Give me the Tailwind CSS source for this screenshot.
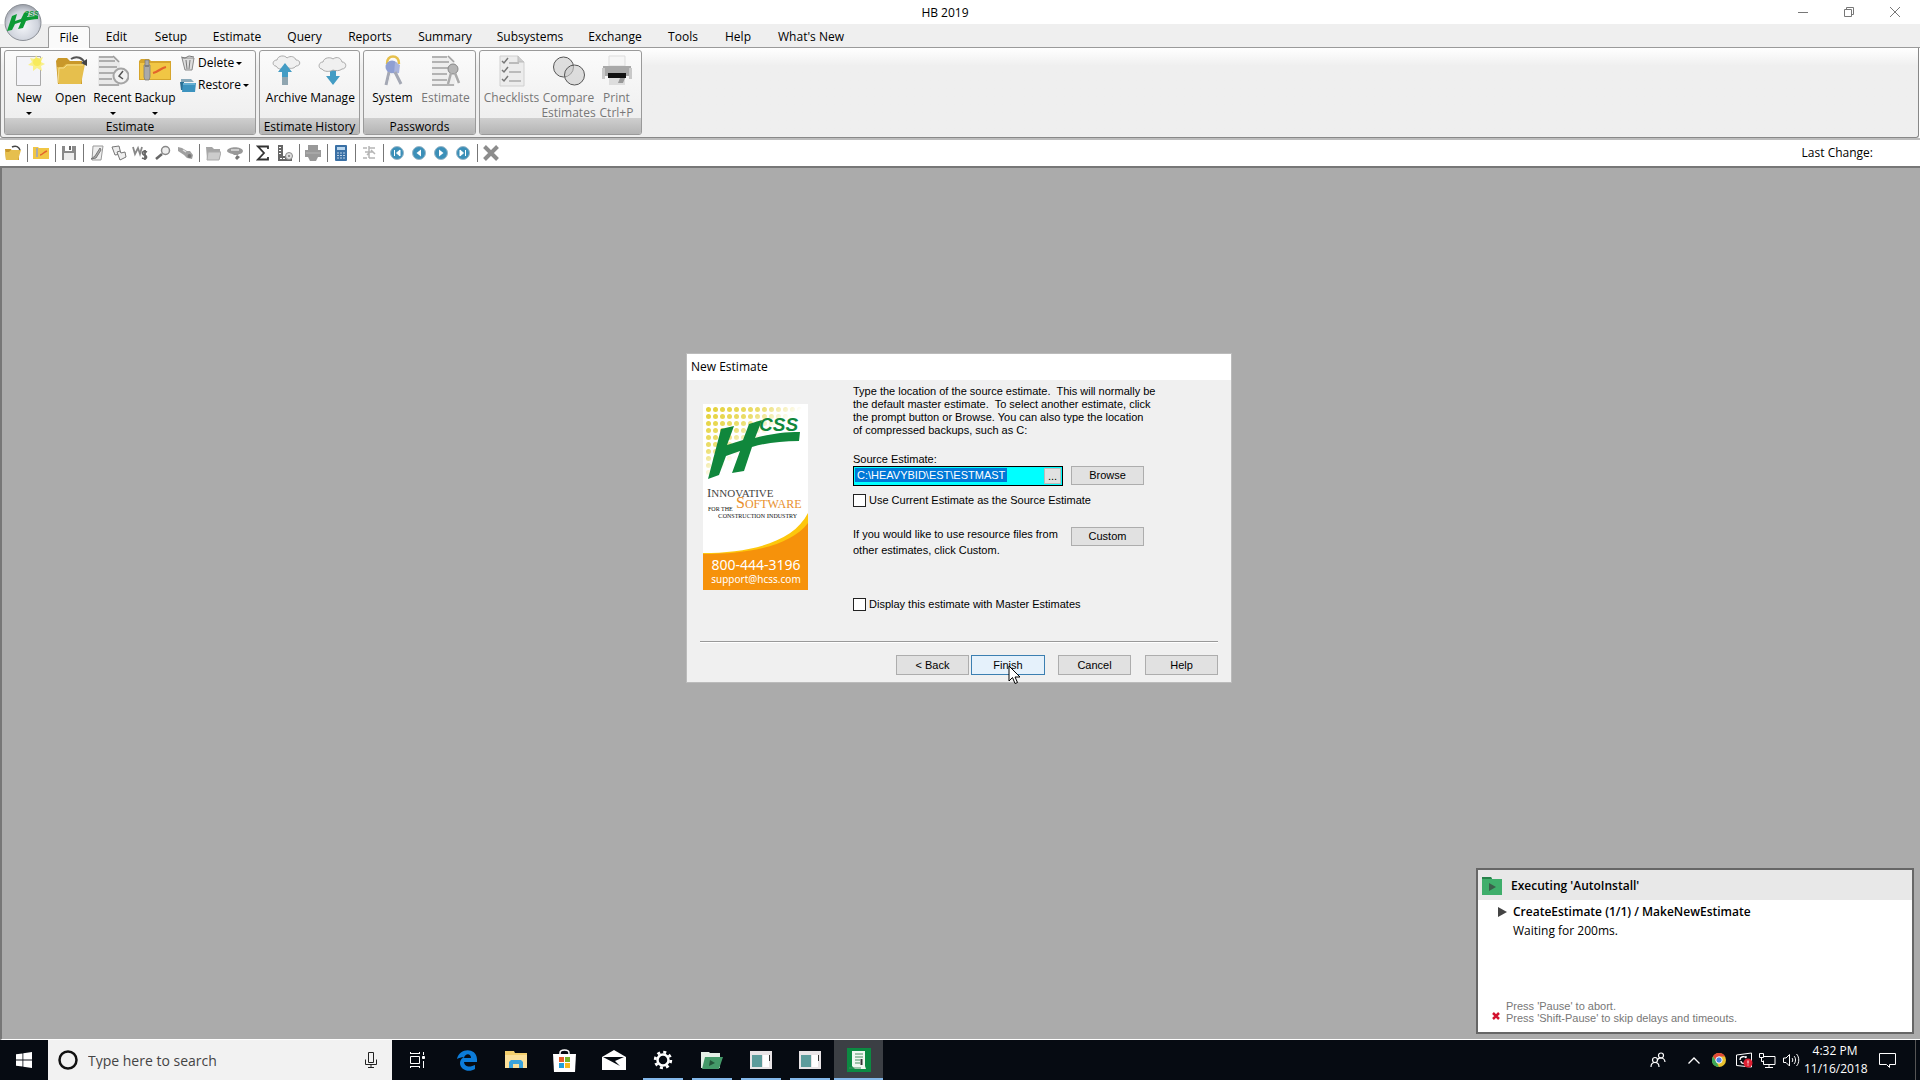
<!DOCTYPE html>
<html lang="en">
<head>
<meta charset="utf-8">
<title>HB 2019</title>
<script src="https://cdn.jsdelivr.net/npm/@tailwindcss/browser@4"></script>
</head>
<body class="h-screen overflow-hidden flex flex-col bg-white text-black text-[12px] leading-4 font-['Open_Sans','Noto_Sans',sans-serif]">

<!-- Title bar -->
<header class="relative h-6 shrink-0 flex items-center bg-white">
  <h1 class="flex-1 text-center pl-[110px] pt-px text-[12px]">HB 2019</h1>
  <div class="flex h-full pr-[2px] text-[#777]">
    <button aria-label="Minimize" class="w-[46px] flex items-center justify-center"><svg width="10" height="10" viewBox="0 0 10 10" stroke="currentColor" fill="none"><path d="M0 5.500h10"/></svg></button>
    <button aria-label="Restore" class="w-[46px] flex items-center justify-center"><svg width="10" height="10" viewBox="0 0 10 10" stroke="currentColor" fill="none"><path d="M.5 2.500h7v7h-7zM2.500 2.500v-2h7v7h-2"/></svg></button>
    <button aria-label="Close" class="w-[46px] flex items-center justify-center"><svg width="10" height="10" viewBox="0 0 10 10" stroke="currentColor" fill="none"><path d="M0 0l10 10M10 0L0 10"/></svg></button>
  </div>
  <button aria-label="Application menu" class="absolute left-1 top-1 z-10">
    <svg width="38" height="38" viewBox="0 0 38 38">
      <defs><radialGradient id="orb" cx=".5" cy=".6" r=".6"><stop offset="0" stop-color="#f4f6fa"/><stop offset=".7" stop-color="#cfd3dc"/><stop offset="1" stop-color="#9a9fa8"/></radialGradient></defs>
      <circle cx="19" cy="18.500" r="18" fill="url(#orb)" stroke="#8b8f96"/>
      <path d="M8 12l5-2-2 7 6-2 3-6 5-1-2 5c4-1 8-1 11-1l0 3c-5 0-9 1-12 2l-3 7-5 1 3-7-6 2-3 6-5 1z" fill="#0c9a35"/>
      <text x="20" y="12" font-family="Liberation Sans" font-weight="bold" font-style="italic" font-size="7" fill="#0c9a35">CSS</text>
    </svg>
  </button>
</header>

<!-- Ribbon tabs -->
<nav class="h-6 shrink-0 bg-[#efefef] border-b border-[#9a9a9a] flex items-end pl-12">
  <button class="w-[42px] mr-px h-[22px] -mb-px bg-[#fafafa] border border-b-0 border-[#9a9a9a] rounded-t-[3px]">File</button>
  <button class="w-[51px] h-5">Edit</button>
  <button class="w-[58px] h-5">Setup</button>
  <button class="w-[74px] h-5">Estimate</button>
  <button class="w-[61px] h-5">Query</button>
  <button class="w-[70px] h-5">Reports</button>
  <button class="w-[80px] h-5">Summary</button>
  <button class="w-[90px] h-5">Subsystems</button>
  <button class="w-[80px] h-5">Exchange</button>
  <button class="w-[56px] h-5">Tools</button>
  <button class="w-[54px] h-5">Help</button>
  <button class="w-[92px] h-5">What's New</button>
</nav>

<!-- Ribbon -->
<section class="h-[90px] shrink-0 mr-px border-x border-b border-[#888] rounded-b-[3px] bg-linear-to-b from-white to-[#efefef] to-20% flex gap-[3px] pl-[3px] pt-[2px] pb-[2px]">
  <div class="w-[252px] border border-[#9a9a9a] rounded-[3px] overflow-hidden flex flex-col bg-linear-to-b from-[#fbfbfb] to-[#ececec]">
    <div class="flex-1 min-h-0 flex pl-[3px] pt-1">
      <button class="w-[42px] flex flex-col items-center">
        <svg class="h-8 w-8 shrink-0" viewBox="0 0 32 32"><path d="M3.500 1.500h24v29h-24z" fill="#f4f4f8" stroke="#aaa"/><path d="M23 0l2 4 5-2-2 5 4 2-4 2 1 5-5-3-4 3 0-5-5-1 4-3-2-4 5 1z" fill="#f9f08a"/><circle cx="24" cy="7" r="4" fill="#f7ea5c"/></svg>
        <span class="pt-[3px]">New</span><span class="mt-[6px] border-x-[3px] border-t-[3px] border-x-transparent border-t-black"></span>
      </button>
      <button class="w-[41px] flex flex-col items-center">
        <svg class="h-8 w-8 shrink-0" viewBox="0 0 32 32"><path d="M1 6l2-3h9l3 3h12v23H3z" fill="#c9982a"/><path d="M2 12h6l3-3h19l-4 20H4z" fill="#e6bf4d"/><path d="M3 28l1-15h5l3-3h16" fill="none" stroke="#f4dc8a"/><path d="M16 4c6-4 12-1 14 5" fill="none" stroke="#555" stroke-width="2"/><path d="M26 8l6 3V4z" fill="#444"/></svg>
        <span class="pt-[3px]">Open</span>
      </button>
      <button class="w-[43px] flex flex-col items-center">
        <svg class="h-8 w-8 shrink-0" viewBox="0 0 32 32"><path d="M1 1h17l5 5v25H1z" fill="#e9e9e9"/><path d="M2 2h14M2 6h16M2 12h18M2 18h15M2 24h13M2 30h20M16 1l6 6" stroke="#999" stroke-width="1.500" fill="none"/><circle cx="24" cy="21" r="7.500" fill="#f2f2f2" stroke="#a5a5a5" stroke-width="2"/><path d="M26 16l-4 5 4 3" fill="none" stroke="#555" stroke-width="1.500"/></svg>
        <span class="pt-[3px]">Recent</span><span class="mt-[6px] border-x-[3px] border-t-[3px] border-x-transparent border-t-black"></span>
      </button>
      <button class="w-[42px] flex flex-col items-center">
        <svg class="h-8 w-8 shrink-0" viewBox="0 0 32 32"><path d="M0 6l2-2h8l2 2h20v19H0z" fill="#d6a52c"/><path d="M1 8h30v16H1z" fill="#f1c644"/><path d="M6 5h4v5h1v12l-1 3H6l-1-3V10h1z" fill="#aaa" stroke="#777" stroke-width=".7"/><path d="M6 11h4" stroke="#555"/><path d="M14 18c5-1 8-5 13-6" fill="none" stroke="#e3642b" stroke-width="2.200"/></svg>
        <span class="pt-[3px]">Backup</span><span class="mt-[6px] border-x-[3px] border-t-[3px] border-x-transparent border-t-black"></span>
      </button>
      <div class="pl-1 flex flex-col items-start gap-[6px]">
        <button class="flex items-center gap-[2px]">
          <svg class="w-4 h-4" viewBox="0 0 16 16"><path d="M2 3h12l-2 12H5z" fill="#ddd" stroke="#888"/><path d="M1 2l4 1 4-2 5 1M6 5l1 9M10 5l-1 9" stroke="#777" fill="none"/></svg>
          <span>Delete</span><span class="border-x-[3px] border-t-[3px] border-x-transparent border-t-black"></span>
        </button>
        <button class="flex items-center gap-[2px]">
          <svg class="w-4 h-4" viewBox="0 0 16 16"><path d="M1 2h10l3 3H1z" fill="#89a9ba"/><path d="M0 5h4v8H1z" fill="#2a6f94"/><path d="M3 6h13l-1 9H2z" fill="#3c93bf"/><path d="M3 7h12" stroke="#8fcbe6"/></svg>
          <span>Restore</span><span class="border-x-[3px] border-t-[3px] border-x-transparent border-t-black"></span>
        </button>
      </div>
    </div>
    <h2 class="h-4 leading-[18px] text-center bg-linear-to-b from-[#cfcfcf] to-[#b4b4b4]">Estimate</h2>
  </div>

  <div class="w-[101px] border border-[#9a9a9a] rounded-[3px] overflow-hidden flex flex-col bg-linear-to-b from-[#fbfbfb] to-[#ececec]">
    <div class="flex-1 min-h-0 flex justify-center pt-1">
      <button class="w-[46px] flex flex-col items-center">
        <svg class="h-8 w-8 shrink-0" viewBox="0 0 32 32"><path d="M5 11c-4 0-4-6 1-6 1-5 8-5 10-2 4-3 8-1 9 2 5 0 5 6 0 6-2 3-7 3-9 1-3 3-9 3-11-1z" fill="#f0f0f0" stroke="#aaa"/><path d="M14 8l7 9h-4v5h-6v-5H7z" fill="#439cc4"/><path d="M11 22h6v8h-6z" fill="#8fa5b0"/></svg>
        <span class="pt-[3px]">Archive</span>
      </button>
      <button class="w-[46px] flex flex-col items-center">
        <svg class="h-8 w-8 shrink-0" viewBox="0 0 32 32"><path d="M13 14h6v7h4l-7 9-7-9h4z" fill="#439cc4"/><path d="M5 14c-4 0-4-7 1-7 1-5 8-5 10-3 4-3 8-1 9 3 5 0 5 7 0 7-2 2-7 2-9 1-3 2-9 2-11-1z" fill="#f0f0f0" stroke="#aaa"/></svg>
        <span class="pt-[3px]">Manage</span>
      </button>
    </div>
    <h2 class="h-4 leading-[18px] text-center whitespace-nowrap bg-linear-to-b from-[#cfcfcf] to-[#b4b4b4]">Estimate History</h2>
  </div>

  <div class="w-[113px] border border-[#9a9a9a] rounded-[3px] overflow-hidden flex flex-col bg-linear-to-b from-[#fbfbfb] to-[#ececec]">
    <div class="flex-1 min-h-0 flex justify-center pt-1">
      <button class="w-[52px] flex flex-col items-center">
        <svg class="h-8 w-8 shrink-0" viewBox="0 0 32 32"><path d="M10 9c-1-10 13-10 12 0" fill="none" stroke="#e6c04c" stroke-width="2.500"/><circle cx="15" cy="12" r="6.500" fill="#8f9fd2"/><path d="M18 7l5 3-1 8-5 1z" fill="#a9b4dd"/><path d="M12 17l-3 13M18 17l6 12" stroke="#a4a8b4" stroke-width="3"/><path d="M14 18l-2 9M15 18l1 2" stroke="#eee" stroke-width="1"/></svg>
        <span class="pt-[3px]">System</span>
      </button>
      <button class="w-[54px] flex flex-col items-center text-[#777]" disabled>
        <svg class="h-8 w-8 shrink-0" viewBox="0 0 32 32"><path d="M2 1h18l5 5v25H2z" fill="#eee"/><path d="M2 2h15M2 7h17M2 13h17M2 19h15M2 25h15M2 30h22M18 1l6 6" stroke="#a0a0a0" stroke-width="1.500" fill="none"/><circle cx="23" cy="14" r="5" fill="#b5b5b5" stroke="#888"/><path d="M21 18l-3 11M25 18l4 10" stroke="#aaa" stroke-width="2.500"/></svg>
        <span class="pt-[3px]">Estimate</span>
      </button>
    </div>
    <h2 class="h-4 leading-[18px] text-center bg-linear-to-b from-[#cfcfcf] to-[#b4b4b4]">Passwords</h2>
  </div>

  <div class="w-[163px] border border-[#9a9a9a] rounded-[3px] overflow-hidden flex flex-col bg-linear-to-b from-[#fbfbfb] to-[#ececec]">
    <div class="flex-1 min-h-0 flex pl-[3px] pt-1 text-[#777]">
      <button class="w-[57px] flex flex-col items-center" disabled>
        <svg class="h-8 w-8 shrink-0" viewBox="0 0 32 32"><path d="M4 1h18l6 6v24H4z" fill="#ececec" stroke="#d0d0d0"/><path d="M22 1v6h6" fill="#ccc" stroke="#bbb"/><path d="M6 6l2 2 4-5M6 15l2 2 4-5M6 24l2 2 4-5" fill="none" stroke="#777" stroke-width="1.500"/><path d="M13 8h10M13 17h12M13 26h12" stroke="#bbb" stroke-width="2"/></svg>
        <span class="pt-[3px]">Checklists</span>
      </button>
      <button class="w-[57px] flex flex-col items-center" disabled>
        <svg class="h-8 w-8 shrink-0" viewBox="0 0 32 32" stroke="#555" fill="#ccc" fill-opacity=".6"><circle cx="10.500" cy="12" r="10"/><circle cx="21.500" cy="20" r="10"/></svg>
        <span class="pt-[3px]">Compare</span><span class="leading-[13px]">Estimates</span>
      </button>
      <button class="w-[39px] flex flex-col items-center" disabled>
        <svg class="h-8 w-8 shrink-0" viewBox="0 0 32 32"><path d="M8 1h16v10H8z" fill="#f6f6f6" stroke="#ddd"/><path d="M2 11h28v10H2z" fill="#a9a9a9"/><path d="M1 13h3v11H1zM28 13h3v11h-3z" fill="#c9c9c9"/><path d="M7 18h18v5H7z" fill="#111"/><path d="M8 23h16v7H8z" fill="#ddd"/><path d="M19 23h5l-2 5h-5z" fill="#999"/></svg>
        <span class="pt-[3px]">Print</span><span class="leading-[13px]">Ctrl+P</span>
      </button>
    </div>
    <div class="h-4 bg-linear-to-b from-[#cfcfcf] to-[#b4b4b4]"></div>
  </div>
</section>

<!-- Quick toolbar -->
<div class="h-7 shrink-0 border-t-2 border-[#bdbdbd] bg-white flex items-center pl-[2px]">
  <button aria-label="Open estimate" class="w-[22px] flex justify-center"><svg width="18" height="16" viewBox="0 0 18 16"><path d="M1 4h6l1 2h7v9H2z" fill="#c9982a"/><path d="M1 7h4l2-2h10l-3 10H2z" fill="#e6bf4d"/><path d="M8 2c4-2 7 0 8 3" fill="none" stroke="#444" stroke-width="1.500"/></svg></button>
  <div class="w-[6px] flex justify-center"><i class="w-px h-[18px] bg-[#777]"></i></div>
  <button aria-label="Backup estimate" class="w-[22px] flex justify-center"><svg width="18" height="16" viewBox="0 0 18 16"><path d="M1 2h5l1 1h10v11H1z" fill="#f1c644"/><path d="M4 3h2v9H4z" fill="#aaa"/><path d="M8 10c2 0 4-3 7-4" fill="none" stroke="#e3642b" stroke-width="1.500"/></svg></button>
  <div class="w-[6px] flex justify-center"><i class="w-px h-[18px] bg-[#777]"></i></div>
  <button aria-label="Save" class="w-[22px] flex justify-center"><svg width="16" height="16" viewBox="0 0 16 16"><path d="M1 1h14v14H1z" fill="#8a8a8a"/><path d="M4 1h7v5H4z" fill="#fff"/><path d="M8 1h2v4H8z" fill="#666"/><path d="M3 8h10v7H3z" fill="#ededed"/></svg></button>
  <div class="w-[6px] flex justify-center"><i class="w-px h-[18px] bg-[#777]"></i></div>
  <button aria-label="Edit" class="w-[22px] flex justify-center"><svg width="16" height="16" viewBox="0 0 16 16"><path d="M4 1h10l-2 14H3z" fill="#eee" stroke="#999"/><path d="M11 3l-5 8-4 3 5-1 5-8z" fill="#aaa" stroke="#777"/></svg></button>
  <button aria-label="Copy" class="w-[22px] flex justify-center"><svg width="16" height="16" viewBox="0 0 16 16" fill="#eee" stroke="#777"><path d="M1 2l7-1 2 8-6 1z"/><path d="M6 7l3-1 1 2 4-1 1 5-6 3z"/></svg></button>
  <button aria-label="Worksheet" class="w-[22px] flex justify-center"><svg width="18" height="16" viewBox="0 0 18 16" fill="none" stroke="#888" stroke-width="1.800"><path d="M1 2l2 7 3-6 2 6 2-7"/><path d="M15 7c-4-2-6 1-3 3 4 1 3 5-2 3M13 5v10" stroke="#666"/></svg></button>
  <button aria-label="Find" class="w-[22px] flex justify-center"><svg width="16" height="16" viewBox="0 0 16 16"><circle cx="10.500" cy="5.500" r="4" fill="#eee" stroke="#888" stroke-width="1.500"/><path d="M7 9l-6 5" stroke="#666" stroke-width="2.500"/></svg></button>
  <button aria-label="Search" class="w-[22px] flex justify-center"><svg width="16" height="16" viewBox="0 0 16 16"><path d="M1 2l4 1 5 3 3 0 3 4-1 4-5-1-3-3-6-4z" fill="#a0a0a0"/><path d="M6 5l3 2" stroke="#ddd" stroke-width="1.500"/><circle cx="12.500" cy="11" r="2" fill="#777"/></svg></button>
  <div class="w-[6px] flex justify-center"><i class="w-px h-[18px] bg-[#777]"></i></div>
  <button aria-label="Folder" class="w-[22px] flex justify-center"><svg width="16" height="16" viewBox="0 0 16 16"><path d="M1 2h6l2 2h6v10H2z" fill="#a5a5a5"/><path d="M3 7h13l-2 8H2z" fill="#ccc" stroke="#aaa"/></svg></button>
  <button aria-label="Assign" class="w-[22px] flex justify-center"><svg width="16" height="16" viewBox="0 0 16 16"><path d="M0 6c1-5 15-5 16 0-1 4-4 2-5 4l-4 0C6 8 1 9 0 6z" fill="#999"/><path d="M4 5h8" stroke="#ccc" stroke-width="2"/><path d="M10 10l3 2-3 3-2-2z" fill="#777"/></svg></button>
  <div class="w-[6px] flex justify-center"><i class="w-px h-[18px] bg-[#777]"></i></div>
  <button aria-label="Sum" class="w-[22px] flex justify-center"><svg width="14" height="16" viewBox="0 0 14 16"><path d="M12 4V1.500H2L8 8l-6 6.500h10V12" fill="none" stroke="#333" stroke-width="1.800"/></svg></button>
  <button aria-label="Measure" class="w-[22px] flex justify-center"><svg width="16" height="16" viewBox="0 0 16 16"><path d="M1 0h5v11h9v5H1z" fill="#666"/><path d="M2 2.500h3M2 5.500h3M2 8.500h3M3 13.500h11" stroke="#fff" stroke-dasharray="2 1"/><circle cx="12" cy="11" r="3.500" fill="#ddd" stroke="#888"/><circle cx="12" cy="11" r="1" fill="#777"/></svg></button>
  <div class="w-[6px] flex justify-center"><i class="w-px h-[18px] bg-[#777]"></i></div>
  <button aria-label="Print" class="w-[22px] flex justify-center"><svg width="16" height="16" viewBox="0 0 16 16" fill="#999"><path d="M3 0h10v5h3v7h-3l-2 4H5l-2-4H0V5h3z"/><path d="M1 8h14" stroke="#b5b5b5"/></svg></button>
  <div class="w-[6px] flex justify-center"><i class="w-px h-[18px] bg-[#777]"></i></div>
  <button aria-label="Calculator" class="w-[22px] flex justify-center"><svg width="12" height="16" viewBox="0 0 12 16"><rect width="12" height="16" rx="1" fill="#3a70a5"/><path d="M2 2h8v3H2z" fill="#b9d6ee"/><path d="M2 8h8M2 10.500h8M2 13h8" stroke="#bcd2e6" stroke-width="1.200" stroke-dasharray="2 1"/></svg></button>
  <div class="w-[6px] flex justify-center"><i class="w-px h-[18px] bg-[#777]"></i></div>
  <button aria-label="Tree" class="w-[22px] flex justify-center"><svg width="14" height="16" viewBox="0 0 14 16" stroke="#b5b5b5" fill="none"><path d="M1 3h4M3 7h8M1 13h4M7 3h6M7 13h6M7 1v12M9 5l4 4M5 10l3-3" stroke-width="1.500"/></svg></button>
  <div class="w-[6px] flex justify-center"><i class="w-px h-[18px] bg-[#777]"></i></div>
  <button aria-label="First" class="w-[22px] flex justify-center"><svg width="14" height="14" viewBox="0 0 14 14"><circle cx="7" cy="7" r="6.500" fill="#3b8fb8" stroke="#9ab6c6"/><path d="M4.500 4v6M10 4L6.500 7 10 10z" fill="#fff" stroke="#fff"/></svg></button>
  <button aria-label="Previous" class="w-[22px] flex justify-center"><svg width="14" height="14" viewBox="0 0 14 14"><circle cx="7" cy="7" r="6.500" fill="#3b8fb8" stroke="#9ab6c6"/><path d="M9 3.500L4.500 7 9 10.500z" fill="#fff"/></svg></button>
  <button aria-label="Next" class="w-[22px] flex justify-center"><svg width="14" height="14" viewBox="0 0 14 14"><circle cx="7" cy="7" r="6.500" fill="#3b8fb8" stroke="#9ab6c6"/><path d="M5 3.500L9.500 7 5 10.500z" fill="#fff"/></svg></button>
  <button aria-label="Last" class="w-[22px] flex justify-center"><svg width="14" height="14" viewBox="0 0 14 14"><circle cx="7" cy="7" r="6.500" fill="#3b8fb8" stroke="#9ab6c6"/><path d="M9.500 4v6M4 4l3.500 3L4 10z" fill="#fff" stroke="#fff"/></svg></button>
  <div class="w-[6px] flex justify-center"><i class="w-px h-[18px] bg-[#777]"></i></div>
  <button aria-label="Close estimate" class="w-[22px] flex justify-center"><svg width="16" height="16" viewBox="0 0 16 16"><path d="M1.500 1.500l13 13M14.500 1.500l-13 13" stroke="#8c8c8c" stroke-width="4"/></svg></button>
  <p class="ml-auto pr-[47px]">Last Change:</p>
</div>

<!-- Work area -->
<main class="relative flex-1 min-h-0 bg-[#ababab] border-t-2 border-l-2 border-[#777] border-b border-b-white">

  <form class="absolute left-[685px] top-[186px] w-[544px] h-[328px] bg-[#f0f0f0] flex flex-col font-['Liberation_Sans',Arial,sans-serif] text-[11px] leading-[13px] shadow-[0_0_0_1px_#bbb]">
    <h2 class="h-[26px] shrink-0 bg-white flex items-center pl-1 pb-[2px] text-[12px] font-['Open_Sans','Noto_Sans',sans-serif]">New Estimate</h2>
    <div class="flex pl-4 h-[261px]">
      <svg class="mt-6 shrink-0" width="105" height="186" viewBox="0 0 105 186">
        <defs><pattern id="dots" width="7" height="7" patternUnits="userSpaceOnUse" x="2" y="2"><circle cx="3.500" cy="3.500" r="2.500" fill="#e3cf2c"/></pattern>
        <linearGradient id="fade" x1="0" y1="0" x2="1" y2="1"><stop offset="0" stop-color="#fff" stop-opacity="0"/><stop offset=".3" stop-color="#fff" stop-opacity=".3"/><stop offset=".5" stop-color="#fff"/></linearGradient></defs>
        <path fill="#fff" d="M0 0h105v186H0z"/>
        <path fill="url(#dots)" d="M2 2h98v70H2z"/><path fill="url(#fade)" d="M0 0h105v80H0z"/>
        <path d="M18 25l13-3-7 19 16-5 6-16 13-4-7 18c15-4 28-6 45-6l-1 9c-18 0-33 2-47 6l-8 24-12 2 8-22-14 5-7 19-11 4z" fill="#10873c"/>
        <text x="56" y="27" font-family="Liberation Sans" font-weight="bold" font-style="italic" font-size="19" fill="#10873c">CSS</text>
        <g font-family="Liberation Serif" fill="#444"><text x="4" y="93" font-size="13">I<tspan font-size="11">NNOVATIVE</tspan></text><text x="33" y="104" font-size="16" fill="#e8902c">S<tspan font-size="12">OFTWARE</tspan></text><text x="5" y="107" font-size="6" fill="#111">FOR THE</text><text x="15" y="114" font-size="7" fill="#111">C<tspan font-size="6">ONSTRUCTION</tspan> I<tspan font-size="6">NDUSTRY</tspan></text></g>
        <path d="M0 149c45 0 90-10 105-40v77H0z" fill="#fdc70c"/><path d="M0 150c50 0 88-9 105-31v67H0z" fill="#f6920b"/>
        <g font-family="Noto Sans" fill="#fff" text-anchor="middle"><text x="53" y="166" font-size="14">800-444-3196</text><text x="53" y="179" font-size="10">support@hcss.com</text></g>
      </svg>
      <div class="ml-[45px] pt-[5px] w-[310px]">
        <p class="whitespace-pre">Type the location of the source estimate.  This will normally be
the default master estimate.  To select another estimate, click
the prompt button or Browse. You can also type the location
of compressed backups, such as C:</p>
        <label for="src" class="block mt-4">Source Estimate:</label>
        <div class="flex items-start gap-2">
          <div class="w-[210px] h-5 border border-black bg-[#00ffff] p-px flex">
            <input id="src" value="C:\HEAVYBID\EST\ESTMAST" class="min-w-0 flex-1 h-[14px] pl-[2px] text-white outline-none bg-no-repeat bg-[linear-gradient(#0078d7,#0078d7)] bg-[length:152px_14px]">
            <button type="button" aria-label="Choose estimate" class="w-[17px] h-4 bg-[#e1e1e1] border border-[#bbb] leading-[13px]">...</button>
          </div>
          <button type="button" class="w-[73px] h-[19px] bg-[#e1e1e1] border border-[#adadad]">Browse</button>
        </div>
        <label class="flex items-center gap-[3px] mt-2"><input type="checkbox" class="appearance-none w-[13px] h-[13px] bg-white border border-[#222]">Use Current Estimate as the Source Estimate</label>
        <div class="flex mt-[19px] gap-2">
          <p class="w-[210px] leading-4">If you would like to use resource files from<br>other estimates, click Custom.</p>
          <button type="button" class="mt-px w-[73px] h-[19px] bg-[#e1e1e1] border border-[#adadad]">Custom</button>
        </div>
        <label class="flex items-center gap-[3px] mt-10"><input type="checkbox" class="appearance-none w-[13px] h-[13px] bg-white border border-[#222]">Display this estimate with Master Estimates</label>
      </div>
    </div>
    <div class="ml-[13px] mr-[13px] border-t border-[#999] shadow-[0_1px_0_#fff_inset] pt-[13px] flex justify-end">
      <button type="button" class="w-[73px] h-5 bg-[#e1e1e1] border border-[#adadad]">&lt; Back</button>
      <button type="button" class="relative ml-[2px] w-[74px] h-5 bg-[#e5f1fb] border border-[#3c7fb1]">Finish
        <svg class="absolute left-9 top-[9px]" width="13" height="20" viewBox="0 0 13 20"><path d="M1 1v15l3.500-3.500L7 18.500l2.500-1L7 12h5z" fill="#fff" stroke="#000"/></svg>
      </button>
      <button type="button" class="ml-[13px] w-[73px] h-5 bg-[#e1e1e1] border border-[#adadad]">Cancel</button>
      <button type="button" class="ml-[14px] w-[73px] h-5 bg-[#e1e1e1] border border-[#adadad]">Help</button>
    </div>
  </form>

  <aside class="absolute right-[6px] bottom-[5px] w-[438px] h-[166px] bg-white border-2 border-[#666] flex flex-col">
    <h2 class="h-[30px] bg-[#e8e8e8] flex items-center gap-[9px] pl-1 pt-px font-semibold">
      <svg width="20" height="18" viewBox="0 0 20 18"><path d="M0 0h9l1 2h10v16H0z" fill="#3fae6b"/><path d="M0 0h9l1 2H0z" fill="#27824a"/><path d="M7 6l7 4-7 4z" fill="#3b5f4b"/></svg>
      Executing 'AutoInstall'</h2>
    <div class="flex gap-[6px] pl-5 pt-1">
      <svg class="mt-[3px]" width="9" height="10" viewBox="0 0 9 10"><path d="M0 0l9 5-9 5z" fill="#444"/></svg>
      <div><p class="font-semibold">CreateEstimate (1/1) / MakeNewEstimate</p><p class="pt-[3px]">Waiting for 200ms.</p></div>
    </div>
    <div class="mt-auto mb-2 pl-[14px] flex items-center gap-[6px] text-[#777] text-[11px] leading-3 font-['Liberation_Sans',Arial,sans-serif]">
      <svg class="mt-2" width="8" height="8" viewBox="0 0 8 8"><path d="M1 1l6 6M7 1L1 7" stroke="#d2122e" stroke-width="2.500"/></svg>
      <p>Press 'Pause' to abort.<br>Press 'Shift-Pause' to skip delays and timeouts.</p>
    </div>
  </aside>
</main>

<!-- Taskbar -->
<footer class="h-10 shrink-0 bg-[#060b12] text-white flex items-stretch">
  <button aria-label="Start" class="w-12 flex items-center justify-center"><svg width="16" height="16" viewBox="0 0 16 16" fill="#fff"><path d="M0 2.300l6.500-.9v6.100H0zM7.300 1.300L16 0v7.500H7.300zM0 8.400h6.500v6.200L0 13.700zM7.300 8.400H16V16l-8.700-1.300z"/></svg></button>
  <div class="w-[344px] bg-[#f2f2f2] flex items-center pl-[10px] pr-[15px] gap-[10px]">
    <svg width="20" height="20" viewBox="0 0 20 20"><circle cx="10" cy="10" r="8.500" fill="none" stroke="#111" stroke-width="2.500"/></svg>
    <input aria-label="Search" placeholder="Type here to search" class="flex-1 min-w-0 pt-[2px] text-[14px] text-[#222] placeholder:text-[#444] outline-none">
    <svg width="12" height="18" viewBox="0 0 12 18" fill="none" stroke="#222"><path d="M3.500 1.500h5v10h-5zM.5 8.500v5h11v-5M6 13.500v3M3 16.500h6"/></svg>
  </div>
  <nav class="flex">
    <button aria-label="Task view" class="w-[50px] flex items-center justify-center"><svg width="16" height="16" viewBox="0 0 16 16" fill="none" stroke="#fff"><path d="M1.500 4.500h9v7h-9zM1 1.500h10M1 14.500h10M1.500 0v2M10.500 0v2M1.500 14v2M10.500 14v2M14.500 0v3M14.500 9v7"/><path d="M13.500 4.500h2v2h-2z" fill="#fff"/></svg></button>
    <button aria-label="Edge" class="w-[49px] flex items-center justify-center"><svg width="20" height="21" viewBox="0 0 20 21"><path d="M0 9C2-2 19-3 20 9v3H7c1 6 7 5 11 3v4c-6 4-15 1-15-6 0-3 2-5 4-6-3 0-5 1-7 2zm7-1h7c0-5-6-5-7 0z" fill="#0c7cd9"/></svg></button>
    <button aria-label="File Explorer" class="w-[49px] flex items-center justify-center"><svg width="22" height="18" viewBox="0 0 22 18"><path d="M0 0h9l1 2h12v15H0z" fill="#f3cf6d"/><path d="M0 4h22v13H0z" fill="#fbe09a"/><path d="M4 17v-6l2-2h10l2 2v6h-4v-4H8v4z" fill="#39a3dc"/></svg></button>
    <button aria-label="Store" class="w-[49px] flex items-center justify-center"><svg width="24" height="23" viewBox="0 0 24 23"><path d="M7 6V4c0-4 9-4 9 0v2" fill="none" stroke="#fff" stroke-width="1.500"/><path d="M0 5h23l-1 18H1z" fill="#fff"/><path d="M6 8h5v5H6z" fill="#e65d2a"/><path d="M12 8h5v5h-5z" fill="#78b428"/><path d="M6 14h5v5H6z" fill="#20a0dc"/><path d="M12 14h5v5h-5z" fill="#f9b91b"/></svg></button>
    <button aria-label="Mail" class="w-[49px] flex items-center justify-center"><svg width="24" height="20" viewBox="0 0 24 20"><path d="M0 7l12-7 12 7v13H0z" fill="#fff"/><path d="M1 7h21l-9 4 5 5L1 7z" fill="#060b12"/></svg></button>
    <button aria-label="Settings" class="relative w-[49px] flex items-center justify-center"><svg width="20" height="20" viewBox="0 0 20 20" fill="none" stroke="#fff"><circle cx="10" cy="10" r="5.500" stroke-width="2.500"/><circle cx="10" cy="10" r="7.800" stroke-width="2.800" stroke-dasharray="3 3.126"/></svg><i class="absolute bottom-0 w-10 h-[2px] bg-[#83b8ea]"></i></button>
    <button aria-label="AutoInstall" class="relative w-[49px] flex items-center justify-center"><svg width="22" height="18" viewBox="0 0 22 18"><path d="M0 1h8l1 1h10v15H0z" fill="#e4efe6"/><path d="M4 6h18l-4 12H1z" fill="#449a69"/><path d="M9 9l5 3-6 3z" fill="#24563b"/></svg><i class="absolute bottom-0 w-10 h-[2px] bg-[#83b8ea]"></i></button>
    <button aria-label="Application window 1" class="relative w-[49px] flex items-center justify-center"><svg width="22" height="18" viewBox="0 0 22 18"><path d="M0 0h22v18H0z" fill="#e8e4e6"/><path d="M2 4h10v12H2z" fill="#5d9c9c"/><path d="M13 4h6v12h-6z" fill="#fff"/><path d="M19.500 4v6" stroke="#333"/></svg><i class="absolute bottom-0 w-10 h-[2px] bg-[#83b8ea]"></i></button>
    <button aria-label="Application window 2" class="relative w-[49px] flex items-center justify-center"><svg width="22" height="18" viewBox="0 0 22 18"><path d="M0 0h22v18H0z" fill="#e8e4e6"/><path d="M2 4h10v12H2z" fill="#5d9c9c"/><path d="M13 4h6v12h-6z" fill="#fff"/><path d="M19.500 4v6" stroke="#333"/></svg><i class="absolute bottom-0 w-10 h-[2px] bg-[#83b8ea]"></i></button>
    <button aria-label="HeavyBid" class="relative w-[49px] flex items-center justify-center bg-[#3b3f44]"><svg width="24" height="24" viewBox="0 0 24 24"><path d="M0 0h24v24H0z" fill="#0c8a42"/><path d="M5 3h13v15l1 3H8l-3-3z" fill="#f1f7f1"/><path d="M8 6h8M8 9h8M8 12h5M8 15h5M2 20h12" stroke="#4a8f62"/><path d="M14.500 11v6" stroke="#333" stroke-width="2"/></svg><i class="absolute bottom-0 w-[49px] h-[2px] bg-[#83b8ea]"></i></button>
  </nav>
  <div class="ml-auto flex items-center">
    <button aria-label="People" class="w-9 flex justify-center"><svg width="16" height="16" viewBox="0 0 16 16" fill="none" stroke="#fff" stroke-width="1.200"><circle cx="11" cy="3.500" r="2.500"/><path d="M7.500 8c1-3 7-3 7.500 2"/><circle cx="5" cy="8" r="2.500"/><path d="M1 15c0-6 8-6 8 0"/></svg></button>
    <button aria-label="Show hidden icons" class="w-9 flex justify-center"><svg width="12" height="7" viewBox="0 0 12 7" fill="none" stroke="#fff" stroke-width="1.300"><path d="M.5 6.500L6 1l5.500 5.500"/></svg></button>
    <button aria-label="Chrome" class="w-6 flex justify-start"><svg width="14" height="14" viewBox="0 0 14 14"><circle cx="7" cy="7" r="7" fill="#e9c22f"/><path d="M1 3.500C4-1.500 11-1 13 3.500H7L4 8z" fill="#e04a38"/><path d="M1 3.500L5 10l2 4C1 14-2 8 1 3.500z" fill="#3ba757"/><circle cx="7" cy="7" r="3.200" fill="#4a84e8" stroke="#fff"/></svg></button>
    <button aria-label="Updates" class="w-[23px] flex justify-start"><svg width="17" height="16" viewBox="0 0 17 16"><path d="M.5 3L15.500 1v14L.5 13.500z" fill="none" stroke="#fff"/><path d="M4 8c0-4 5-4 6-2V4M5 9c0 3 4 3 5 1" stroke="#fff" fill="none" stroke-width="1.300"/><circle cx="12" cy="11" r="4.500" fill="#dc2032"/><path d="M12 8.500v3M12 12.500v1" stroke="#fff"/></svg></button>
    <button aria-label="Network" class="w-6 flex justify-start"><svg width="17" height="15" viewBox="0 0 17 15" fill="none" stroke="#fff"><path d="M5 3.500h11v8H4.500v-4M10 11.500v3M6 14.500h8M.5.5h4v4h-4zM2.500 4.500v4h2"/></svg></button>
    <button aria-label="Volume" class="w-[21px] flex justify-start"><svg width="17" height="14" viewBox="0 0 17 14" fill="none" stroke="#fff"><path d="M.5 5v4.500H3L6.500 13V1.500L3 5zM9 5c1 1 1 3 0 4M11 3c2 2 2 6 0 8M13.500 1c3 3 3 9 0 12"/></svg></button>
    <p class="w-[62px] text-center leading-[18px]">4:32 PM<br>11/16/2018</p>
    <button aria-label="Action center" class="w-[42px] flex justify-center"><svg width="17" height="17" viewBox="0 0 17 17" fill="none" stroke="#fff"><path d="M.5 1.500h16v11h-6v3l-3-3h-7z"/></svg></button>
    <i class="ml-[7px] mr-1 w-px h-10 bg-[#555]"></i>
  </div>
</footer>
</body>
</html>
